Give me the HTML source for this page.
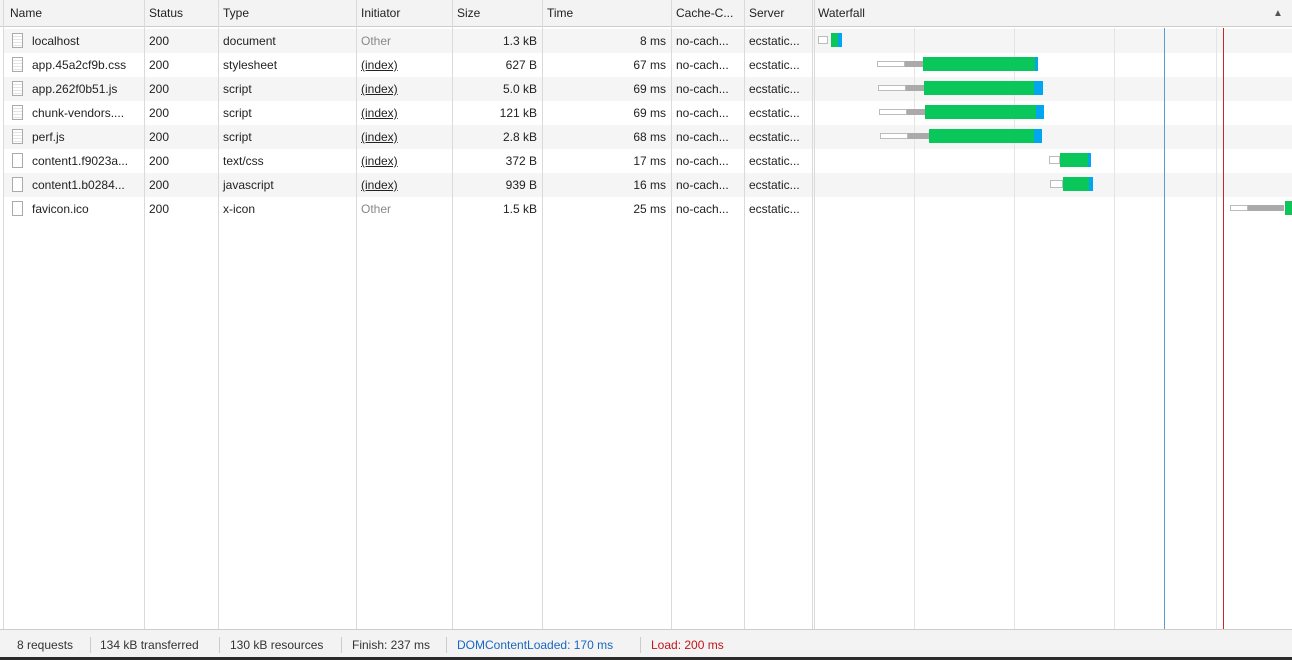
<!DOCTYPE html>
<html><head><meta charset="utf-8"><style>
*{margin:0;padding:0;box-sizing:border-box}
body{width:1292px;height:660px;overflow:hidden;background:#fff;font-family:"Liberation Sans",sans-serif;font-size:12px;color:#222;position:relative}
.a{position:absolute}
.hdr{left:0;top:0;width:1292px;height:27px;background:#f3f3f3;border-bottom:1px solid #cdcdcd}
.row{left:4px;width:1288px;height:24px}
.g{background:#f5f5f5}
.vl{position:absolute;top:0;width:1px;height:629px;background:#dadada}
.t{position:absolute;white-space:nowrap;line-height:24px;top:0}
.h{position:absolute;top:0;line-height:27px;white-space:nowrap}
.r{text-align:right}
.gr{color:#888}
.u{text-decoration:underline}
.ic{position:absolute;width:11px;height:15px;border:1px solid #aaa;background:#fff}
.ic.f{background:repeating-linear-gradient(#fff 0 2px,#e4e4e4 2px 3px);}
.b{position:absolute;height:14px}
.w{position:absolute;height:6px;border:1px solid #bbb;background:#fff}
.foot{left:0;top:629px;width:1292px;height:28px;background:#f3f3f3;border-top:1px solid #cdcdcd;color:#333}
.foot span{position:absolute;top:0;line-height:30px;white-space:nowrap}
.sep{position:absolute;top:7px;width:1px;height:16px;background:#ccc}
</style></head><body>
<div class="a hdr"></div>
<div class="a" style="left:0;top:657px;width:1292px;height:3px;background:#2b2b2b"></div>
<div class="a row g" style="top:29px"></div>
<div class="a row g" style="top:77px"></div>
<div class="a row g" style="top:125px"></div>
<div class="a row g" style="top:173px"></div>

<div class="vl" style="left:3px"></div>
<div class="vl" style="left:144px"></div>
<div class="vl" style="left:218px"></div>
<div class="vl" style="left:356px"></div>
<div class="vl" style="left:452px"></div>
<div class="vl" style="left:542px"></div>
<div class="vl" style="left:671px"></div>
<div class="vl" style="left:744px"></div>
<div class="vl" style="left:812px"></div>
<div class="vl" style="left:814px"></div>
<div class="vl" style="left:914px;top:28px;height:601px;background:#e4e4e4"></div>
<div class="vl" style="left:1014px;top:28px;height:601px;background:#e4e4e4"></div>
<div class="vl" style="left:1114px;top:28px;height:601px;background:#e4e4e4"></div>
<div class="vl" style="left:1216px;top:28px;height:601px;background:#e4e4e4"></div>
<div class="vl" style="left:1164px;top:28px;height:601px;background:#5b9bd5"></div>
<div class="vl" style="left:1223px;top:28px;height:601px;background:#c8262b"></div>

<div class="h" style="left:10px">Name</div>
<div class="h" style="left:149px">Status</div>
<div class="h" style="left:223px">Type</div>
<div class="h" style="left:361px">Initiator</div>
<div class="h" style="left:457px">Size</div>
<div class="h" style="left:547px">Time</div>
<div class="h" style="left:676px">Cache-C...</div>
<div class="h" style="left:749px">Server</div>
<div class="h" style="left:818px">Waterfall</div>
<div class="h" style="left:1273px;font-size:10px;color:#555">▲</div>

<div class="ic f" style="left:12px;top:33px"></div>
<div class="ic f" style="left:12px;top:57px"></div>
<div class="ic f" style="left:12px;top:81px"></div>
<div class="ic f" style="left:12px;top:105px"></div>
<div class="ic f" style="left:12px;top:129px"></div>
<div class="ic" style="left:12px;top:153px"></div>
<div class="ic" style="left:12px;top:177px"></div>
<div class="ic" style="left:12px;top:201px"></div>

<div class="t" style="left:32px;top:29px">localhost</div>
<div class="t" style="left:32px;top:53px">app.45a2cf9b.css</div>
<div class="t" style="left:32px;top:77px">app.262f0b51.js</div>
<div class="t" style="left:32px;top:101px">chunk-vendors....</div>
<div class="t" style="left:32px;top:125px">perf.js</div>
<div class="t" style="left:32px;top:149px">content1.f9023a...</div>
<div class="t" style="left:32px;top:173px">content1.b0284...</div>
<div class="t" style="left:32px;top:197px">favicon.ico</div>

<div class="t" style="left:149px;top:29px">200</div>
<div class="t" style="left:149px;top:53px">200</div>
<div class="t" style="left:149px;top:77px">200</div>
<div class="t" style="left:149px;top:101px">200</div>
<div class="t" style="left:149px;top:125px">200</div>
<div class="t" style="left:149px;top:149px">200</div>
<div class="t" style="left:149px;top:173px">200</div>
<div class="t" style="left:149px;top:197px">200</div>

<div class="t" style="left:223px;top:29px">document</div>
<div class="t" style="left:223px;top:53px">stylesheet</div>
<div class="t" style="left:223px;top:77px">script</div>
<div class="t" style="left:223px;top:101px">script</div>
<div class="t" style="left:223px;top:125px">script</div>
<div class="t" style="left:223px;top:149px">text/css</div>
<div class="t" style="left:223px;top:173px">javascript</div>
<div class="t" style="left:223px;top:197px">x-icon</div>

<div class="t gr" style="left:361px;top:29px">Other</div>
<div class="t u" style="left:361px;top:53px">(index)</div>
<div class="t u" style="left:361px;top:77px">(index)</div>
<div class="t u" style="left:361px;top:101px">(index)</div>
<div class="t u" style="left:361px;top:125px">(index)</div>
<div class="t u" style="left:361px;top:149px">(index)</div>
<div class="t u" style="left:361px;top:173px">(index)</div>
<div class="t gr" style="left:361px;top:197px">Other</div>

<div class="t r" style="left:452px;width:85px;top:29px">1.3 kB</div>
<div class="t r" style="left:452px;width:85px;top:53px">627 B</div>
<div class="t r" style="left:452px;width:85px;top:77px">5.0 kB</div>
<div class="t r" style="left:452px;width:85px;top:101px">121 kB</div>
<div class="t r" style="left:452px;width:85px;top:125px">2.8 kB</div>
<div class="t r" style="left:452px;width:85px;top:149px">372 B</div>
<div class="t r" style="left:452px;width:85px;top:173px">939 B</div>
<div class="t r" style="left:452px;width:85px;top:197px">1.5 kB</div>

<div class="t r" style="left:542px;width:124px;top:29px">8 ms</div>
<div class="t r" style="left:542px;width:124px;top:53px">67 ms</div>
<div class="t r" style="left:542px;width:124px;top:77px">69 ms</div>
<div class="t r" style="left:542px;width:124px;top:101px">69 ms</div>
<div class="t r" style="left:542px;width:124px;top:125px">68 ms</div>
<div class="t r" style="left:542px;width:124px;top:149px">17 ms</div>
<div class="t r" style="left:542px;width:124px;top:173px">16 ms</div>
<div class="t r" style="left:542px;width:124px;top:197px">25 ms</div>

<div class="t" style="left:676px;top:29px">no-cach...</div>
<div class="t" style="left:676px;top:53px">no-cach...</div>
<div class="t" style="left:676px;top:77px">no-cach...</div>
<div class="t" style="left:676px;top:101px">no-cach...</div>
<div class="t" style="left:676px;top:125px">no-cach...</div>
<div class="t" style="left:676px;top:149px">no-cach...</div>
<div class="t" style="left:676px;top:173px">no-cach...</div>
<div class="t" style="left:676px;top:197px">no-cach...</div>

<div class="t" style="left:749px;top:29px">ecstatic...</div>
<div class="t" style="left:749px;top:53px">ecstatic...</div>
<div class="t" style="left:749px;top:77px">ecstatic...</div>
<div class="t" style="left:749px;top:101px">ecstatic...</div>
<div class="t" style="left:749px;top:125px">ecstatic...</div>
<div class="t" style="left:749px;top:149px">ecstatic...</div>
<div class="t" style="left:749px;top:173px">ecstatic...</div>
<div class="t" style="left:749px;top:197px">ecstatic...</div>

<div class="w" style="left:818px;top:36px;width:10px;height:8px"></div>
<div class="b" style="left:831px;top:33px;width:7px;background:#0ac75b"></div>
<div class="b" style="left:838px;top:33px;width:4px;background:#00a6f0"></div>

<div class="w" style="left:877px;top:61px;width:28px"></div>
<div class="b" style="left:905px;top:61px;height:6px;width:18px;background:#aaa"></div>
<div class="b" style="left:923px;top:57px;width:112px;background:#0ac75b"></div>
<div class="b" style="left:1035px;top:57px;width:3px;background:#00a6f0"></div>

<div class="w" style="left:878px;top:85px;width:28px"></div>
<div class="b" style="left:906px;top:85px;height:6px;width:18px;background:#aaa"></div>
<div class="b" style="left:924px;top:81px;width:110px;background:#0ac75b"></div>
<div class="b" style="left:1034px;top:81px;width:9px;background:#00a6f0"></div>

<div class="w" style="left:879px;top:109px;width:28px"></div>
<div class="b" style="left:907px;top:109px;height:6px;width:18px;background:#aaa"></div>
<div class="b" style="left:925px;top:105px;width:111px;background:#0ac75b"></div>
<div class="b" style="left:1036px;top:105px;width:8px;background:#00a6f0"></div>

<div class="w" style="left:880px;top:133px;width:28px"></div>
<div class="b" style="left:908px;top:133px;height:6px;width:21px;background:#aaa"></div>
<div class="b" style="left:929px;top:129px;width:105px;background:#0ac75b"></div>
<div class="b" style="left:1034px;top:129px;width:8px;background:#00a6f0"></div>

<div class="w" style="left:1049px;top:156px;width:11px;height:8px"></div>
<div class="b" style="left:1060px;top:153px;width:28px;background:#0ac75b"></div>
<div class="b" style="left:1088px;top:153px;width:3px;background:#00a6f0"></div>

<div class="w" style="left:1050px;top:180px;width:13px;height:8px"></div>
<div class="b" style="left:1063px;top:177px;width:26px;background:#0ac75b"></div>
<div class="b" style="left:1089px;top:177px;width:4px;background:#00a6f0"></div>

<div class="w" style="left:1230px;top:205px;width:18px"></div>
<div class="b" style="left:1248px;top:205px;height:6px;width:36px;background:#aaa"></div>
<div class="b" style="left:1285px;top:201px;width:7px;background:#0ac75b"></div>

<div class="a foot">
<span style="left:17px">8 requests</span>
<div class="sep" style="left:90px"></div>
<span style="left:100px">134 kB transferred</span>
<div class="sep" style="left:219px"></div>
<span style="left:230px">130 kB resources</span>
<div class="sep" style="left:341px"></div>
<span style="left:352px">Finish: 237 ms</span>
<div class="sep" style="left:446px"></div>
<span style="left:457px;color:#1a66c2">DOMContentLoaded: 170 ms</span>
<div class="sep" style="left:640px"></div>
<span style="left:651px;color:#c0161c">Load: 200 ms</span>
</div>
</body></html>
